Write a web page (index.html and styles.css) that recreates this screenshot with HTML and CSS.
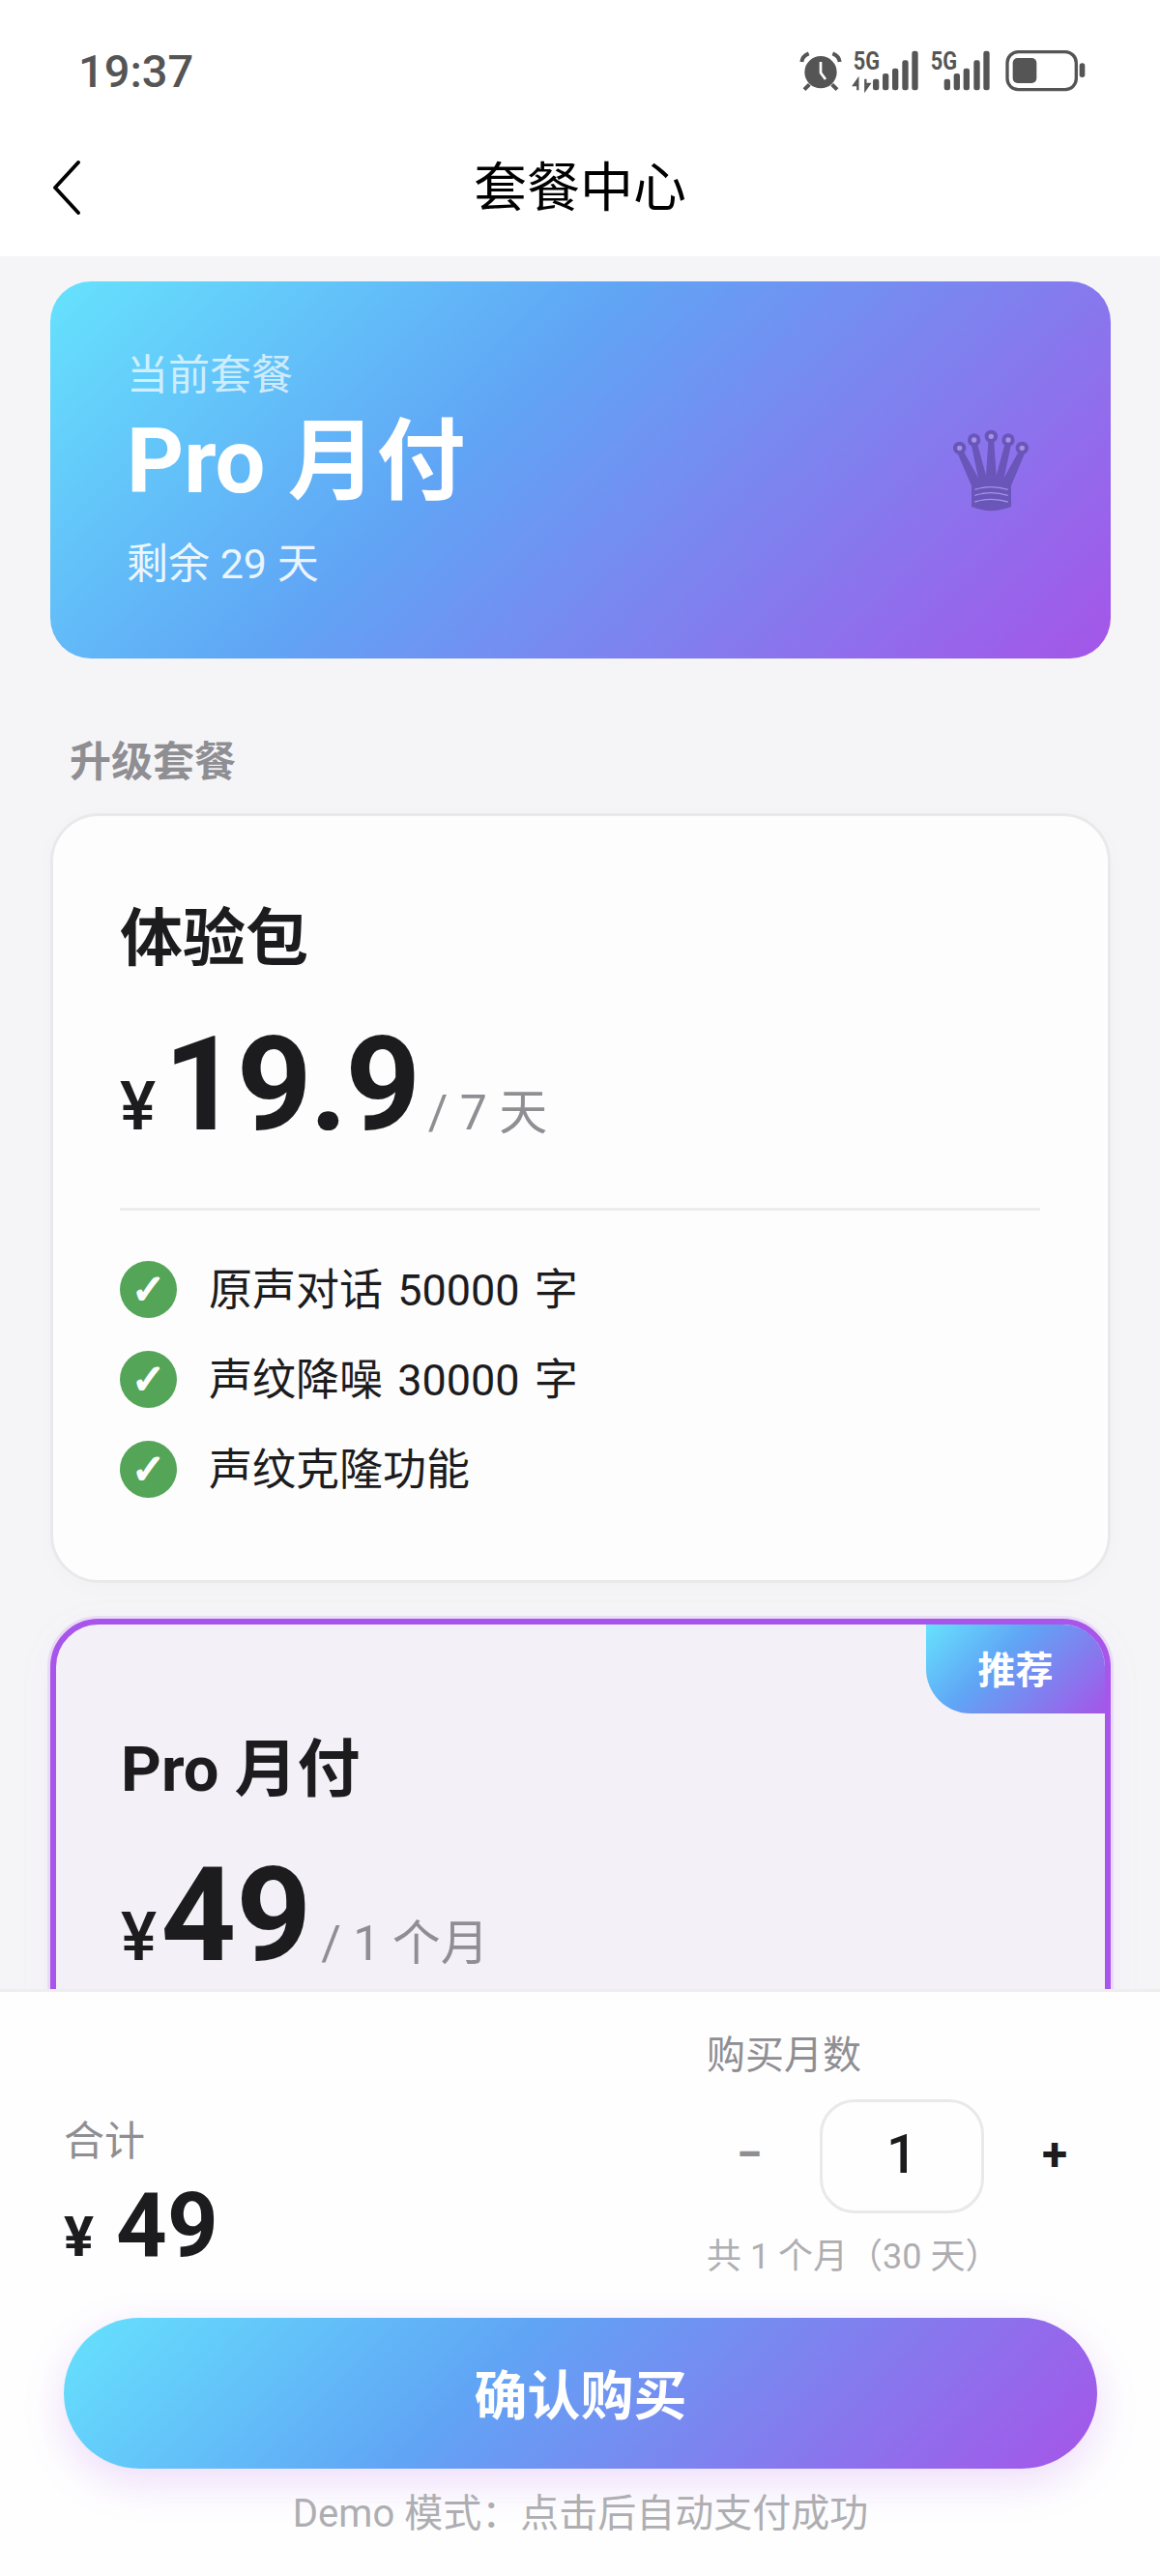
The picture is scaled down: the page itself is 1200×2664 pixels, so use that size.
FILE: index.html
```html
<!DOCTYPE html>
<html lang="zh-CN">
<head>
    <meta charset="UTF-8">
    <meta name="viewport" content="width=device-width, initial-scale=1.0">
    <title>套餐中心</title>
    <link rel="stylesheet" href="styles.css">
</head>
<body>
    <header class="top">
        <div class="status-bar">
            <span class="clock">19:37</span>
            <svg class="status-icons" viewBox="0 0 1080 240" fill="#555">
                <circle cx="207" cy="134" r="50"/>
                <path d="M207 102V136L222 156" fill="none" stroke="#fff" stroke-width="8"/>
                <path d="M148 102Q150 84 170 76M266 102Q264 84 244 76M156 188L172 172M258 188L242 172" fill="none" stroke="#555" stroke-width="12"/>
                <text x="308" y="125" class="net" textLength="82" lengthAdjust="spacingAndGlyphs">5G</text>
                <path d="M322 190V157L310 174H320M346 155V188L358 171H348" fill="none" stroke="#555" stroke-width="7"/>
                <rect x="369" y="155" width="19" height="35" rx="7"/>
                <rect x="399" y="138" width="19" height="52" rx="7"/>
                <rect x="429" y="122" width="19" height="68" rx="7"/>
                <rect x="460" y="97" width="19" height="93" rx="7"/>
                <rect x="490" y="68" width="19" height="122" rx="7"/>
                <text x="548" y="125" class="net" textLength="82" lengthAdjust="spacingAndGlyphs">5G</text>
                <rect x="590" y="155" width="19" height="35" rx="7"/>
                <rect x="620" y="138" width="19" height="52" rx="7"/>
                <rect x="650" y="122" width="19" height="68" rx="7"/>
                <rect x="682" y="97" width="19" height="93" rx="7"/>
                <rect x="712" y="68" width="19" height="122" rx="7"/>
                <rect x="786" y="71" width="214" height="117" rx="34" fill="none" stroke="#555" stroke-width="10"/>
                <rect x="803" y="90" width="74" height="78" rx="15"/>
                <rect x="1010" y="106" width="17" height="44" rx="8"/>
            </svg>
        </div>
        <nav class="nav">
            <svg class="back" viewBox="0 0 30 56" fill="none" stroke="#000" stroke-width="3.8" stroke-linecap="round" stroke-linejoin="round">
                <path d="M27 2L3 28L27 54"/>
            </svg>
            <h1 class="nav-title">套餐中心</h1>
        </nav>
    </header>

    <main class="content">
        <section class="hero">
            <div>
                <p class="hero-label">当前套餐</p>
                <p class="hero-plan">Pro 月付</p>
                <p class="hero-days">剩余 29 天</p>
            </div>
            <svg class="crown" viewBox="135 75 240 255" fill="#6a55b8">
                <circle cx="158" cy="133" r="20"/>
                <circle cx="203" cy="108" r="20"/>
                <circle cx="256" cy="97" r="20"/>
                <circle cx="309" cy="108" r="20"/>
                <circle cx="352" cy="133" r="20"/>
                <path d="M195 250L152 150L172 146L216 226L195 125L214 122L240 218L247 115L265 115L272 218L298 122L317 125L296 226L340 146L360 150L318 250V315Q256 340 195 315Z"/>
                <g fill="#a593ea">
                    <circle cx="158" cy="133" r="8"/>
                    <circle cx="203" cy="108" r="8"/>
                    <circle cx="256" cy="97" r="8"/>
                    <circle cx="309" cy="108" r="8"/>
                    <circle cx="352" cy="133" r="8"/>
                </g>
                <path d="M205 262Q256 246 308 262M205 280Q256 264 308 280M205 300Q256 284 308 300" fill="none" stroke="#a593ea" stroke-width="4"/>
            </svg>
        </section>

        <h2 class="section-title">升级套餐</h2>

        <section class="card">
            <h3 class="plan-name">体验包</h3>
            <div class="price">
                <span class="yen">¥</span><span class="amount amount-tight">19.9</span><span class="period">/ 7 天</span>
            </div>
            <div class="divider"></div>
            <ul class="features">
                <li><span class="check">✓</span><span class="feature-text">原声对话 50000 字</span></li>
                <li><span class="check">✓</span><span class="feature-text">声纹降噪 30000 字</span></li>
                <li><span class="check">✓</span><span class="feature-text">声纹克隆功能</span></li>
            </ul>
        </section>

        <section class="card card-active">
            <span class="badge">推荐</span>
            <h3 class="plan-name">Pro 月付</h3>
            <div class="price">
                <span class="yen">¥</span><span class="amount">49</span><span class="period">/ 1 个月</span>
            </div>
        </section>
    </main>

    <footer class="panel">
        <div class="summary">
            <div class="total">
                <p class="total-label">合计</p>
                <p class="total-price"><span class="total-yen">¥</span><span class="total-amount">49</span></p>
            </div>
            <div class="months">
                <p class="months-label">购买月数</p>
                <div class="stepper">
                    <button type="button" class="step step-minus">−</button>
                    <span class="step-value">1</span>
                    <button type="button" class="step">+</button>
                </div>
                <p class="months-note">共 1 个月（30 天）</p>
            </div>
        </div>
        <button type="button" class="buy">确认购买</button>
        <p class="demo-note">Demo 模式：点击后自动支付成功</p>
    </footer>
</body>
</html>
```

FILE: styles.css
```css
* {
    box-sizing: border-box;
    margin: 0;
    padding: 0;
}
body {
    width: 1200px;
    height: 2664px;
    display: flex;
    flex-direction: column;
    overflow: hidden;
    background: #f5f5f7;
    color: #1c1c1e;
    font-family: Roboto, "Noto Sans CJK SC", sans-serif;
}
.top {
    height: 265px;
    background: #fff;
}
.status-bar {
    display: flex;
    justify-content: space-between;
    align-items: center;
    height: 80px;
    margin-top: 30px;
    padding: 0 60px 0 81px;
}
.clock {
    padding-top: 6px;
    font-size: 47px;
    font-weight: 500;
    color: #555;
}
.status-icons {
    width: 360px;
    height: 80px;
}
.net {
    font-family: Roboto, sans-serif;
    font-size: 78px;
    font-weight: 700;
}
.nav {
    display: grid;
    grid-template-columns: 1fr auto 1fr;
    align-items: center;
    height: 155px;
    padding-top: 13px;
}
.back {
    width: 30px;
    height: 56px;
    margin-left: 54px;
}
.nav-title {
    font-size: 55px;
    font-weight: 400;
    color: #000;
    line-height: 70px;
}
.content {
    flex: 1;
    min-height: 0;
    overflow: hidden;
    padding: 26px 51px 0 52px;
}
.hero {
    display: flex;
    justify-content: space-between;
    align-items: center;
    height: 390px;
    padding: 0 84px 0 79px;
    border-radius: 42px;
    background: linear-gradient(135deg, #66e2fd, #60a5f5 40%, #a555e8);
    color: #fff;
}
.hero-label {
    margin-top: -2px;
    font-size: 43px;
    line-height: 50px;
    color: rgba(255, 255, 255, 0.7);
}
.hero-plan {
    margin-top: 15px;
    font-size: 92px;
    font-weight: 700;
    line-height: 100px;
}
.hero-days {
    margin-top: 30px;
    font-size: 43px;
    line-height: 50px;
    color: rgba(255, 255, 255, 0.9);
}
.crown {
    width: 80px;
    height: 85px;
}
.section-title {
    margin: 82px 0 28px 20px;
    font-size: 43px;
    font-weight: 700;
    line-height: 50px;
    color: #8e8e93;
}
.card {
    position: relative;
    height: 796px;
    padding: 87px 70px 0 69px;
    border: 3px solid #e9e9eb;
    border-radius: 50px;
    background: #fdfdfd;
    box-shadow: 0 4px 24px rgba(0, 0, 0, 0.02);
}
.card-active {
    height: 600px;
    margin-top: 37px;
    padding: 110px 67px 0;
    border: 6px solid #a855eb;
    background: #f3f1f7;
    box-shadow: 0 0 0 3px rgba(168, 85, 235, 0.14), 0 8px 40px rgba(168, 85, 235, 0.05);
}
.badge {
    position: absolute;
    top: 0;
    right: 0;
    width: 185px;
    height: 92px;
    border-radius: 0 44px 0 46px;
    background: linear-gradient(135deg, #66e2fd, #60a5f5 40%, #a555e8);
    color: #fff;
    font-size: 39px;
    font-weight: 700;
    line-height: 96px;
    text-align: center;
}
.plan-name {
    font-size: 65px;
    font-weight: 700;
    line-height: 80px;
}
.price {
    display: flex;
    align-items: baseline;
    margin-top: 41px;
    height: 140px;
}
.yen {
    margin-right: 4px;
    font-size: 70px;
    font-weight: 500;
    line-height: 1;
}
.amount {
    font-size: 136px;
    font-weight: 700;
    line-height: 140px;
}
.amount-tight {
    margin-left: 4px;
    letter-spacing: -2.5px;
}
.period {
    margin-left: 10px;
    font-size: 50px;
    color: #8e8e93;
}
.divider {
    height: 3px;
    margin-top: 57px;
    background: #ececee;
}
.features {
    margin-top: 52px;
    list-style: none;
}
.features li {
    display: flex;
    align-items: center;
    gap: 33px;
    height: 59px;
    margin-bottom: 34px;
    font-size: 45px;
    word-spacing: 4px;
}
.feature-text {
    margin-bottom: 6px;
}
.check {
    width: 59px;
    height: 59px;
    border-radius: 50%;
    background: #54a557;
    color: #fff;
    font-family: "DejaVu Sans", sans-serif;
    font-size: 42px;
    font-weight: 700;
    line-height: 59px;
    text-align: center;
    -webkit-text-stroke: 2px #fff;
}
.panel {
    height: 607px;
    padding: 41px 65px 0 66px;
    border-top: 3px solid #eeeeef;
    background: #fefefe;
}
.summary {
    display: flex;
    justify-content: space-between;
}
.total {
    padding-top: 89px;
}
.total-label {
    font-size: 42px;
    line-height: 50px;
    color: #8e8e93;
}
.total-price {
    display: flex;
    align-items: baseline;
    margin-top: 12px;
    height: 100px;
}
.total-yen {
    margin-right: 23px;
    font-size: 58px;
    font-weight: 700;
}
.total-amount {
    font-size: 92px;
    font-weight: 700;
    line-height: 100px;
}
.months {
    width: 404px;
}
.months-label {
    font-size: 40px;
    line-height: 50px;
    color: #8e8e93;
}
.stepper {
    display: flex;
    align-items: center;
    gap: 29px;
    margin-top: 20px;
}
.step {
    width: 88px;
    margin-bottom: 5px;
    border: none;
    background: none;
    color: #1c1c1e;
    font-family: inherit;
    font-size: 48px;
    font-weight: 700;
}
.step-minus {
    color: #8e8e93;
}
.step-value {
    width: 170px;
    height: 118px;
    border: 3px solid #e9e9eb;
    border-radius: 36px;
    font-size: 56px;
    font-weight: 500;
    line-height: 108px;
    text-align: center;
}
.months-note {
    margin-top: 23px;
    font-size: 36px;
    line-height: 44px;
    color: #aeaeb2;
    white-space: nowrap;
}
.buy {
    display: block;
    width: 100%;
    height: 156px;
    margin-top: 41px;
    padding-bottom: 5px;
    border: none;
    border-radius: 78px;
    background: linear-gradient(135deg, #66e2fd, #60a5f5 40%, #a555e8);
    box-shadow: 0 14px 44px rgba(168, 85, 235, 0.2);
    color: #fff;
    font-family: inherit;
    font-size: 55px;
    font-weight: 700;
}
.demo-note {
    margin-top: 22px;
    font-size: 40px;
    line-height: 50px;
    color: #aeaeb2;
    text-align: center;
}
```
